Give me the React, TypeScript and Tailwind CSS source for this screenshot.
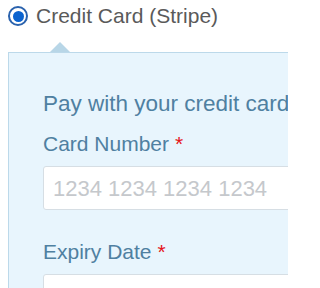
export default function App() {
  return (
    <div className="w-[288px] h-[288px] overflow-hidden bg-white font-['Liberation_Sans',Arial,sans-serif]">
      <label className="flex items-center h-[24px] mt-[4px] pl-[8px]">
        <span className="w-[20px] h-[20px] rounded-full border-2 border-[#2a62ad] flex items-center justify-center shrink-0">
          <span className="w-[11px] h-[11px] rounded-full bg-[#0b63cf]" />
        </span>
        <span className="ml-[8px] text-[21px] leading-[24px] text-[#5a5a5a] whitespace-nowrap">Credit Card (Stripe)</span>
      </label>

      <div className="relative mt-[24px] ml-[8px] w-[420px] border border-[#bcd9ea] bg-[#e8f5fd] px-[34px] pt-[38px] pb-[20px]">
        <span className="absolute -top-[11px] left-[41px] w-0 h-0 border-l-[10px] border-r-[10px] border-b-[10px] border-l-transparent border-r-transparent border-b-[#b8d6e7]" />
        <p className="text-[22.5px] leading-[26px] text-[#4f80a1] whitespace-nowrap">Pay with your credit card</p>

        <div className="mt-[14px] text-[21px] leading-[1.2] text-[#4f80a1] whitespace-nowrap">
          Card Number <span className="text-[#e5141a]">*</span>
        </div>
        <div className="mt-[10px] h-[44px] rounded-[3px] border border-[#d6dee4] bg-white flex items-center pl-[9px]">
          <span className="text-[22px] text-[#c5c8cc] whitespace-nowrap">1234 1234 1234 1234</span>
        </div>

        <div className="mt-[29px] text-[21px] leading-[1.2] text-[#4f80a1] whitespace-nowrap">
          Expiry Date <span className="text-[#e5141a]">*</span>
        </div>
        <div className="mt-[10px] h-[44px] rounded-[3px] border border-[#d6dee4] bg-white flex items-center pl-[9px]">
          <span className="text-[22px] text-[#c5c8cc] whitespace-nowrap">MM / YY</span>
        </div>
      </div>
    </div>
  );
}
